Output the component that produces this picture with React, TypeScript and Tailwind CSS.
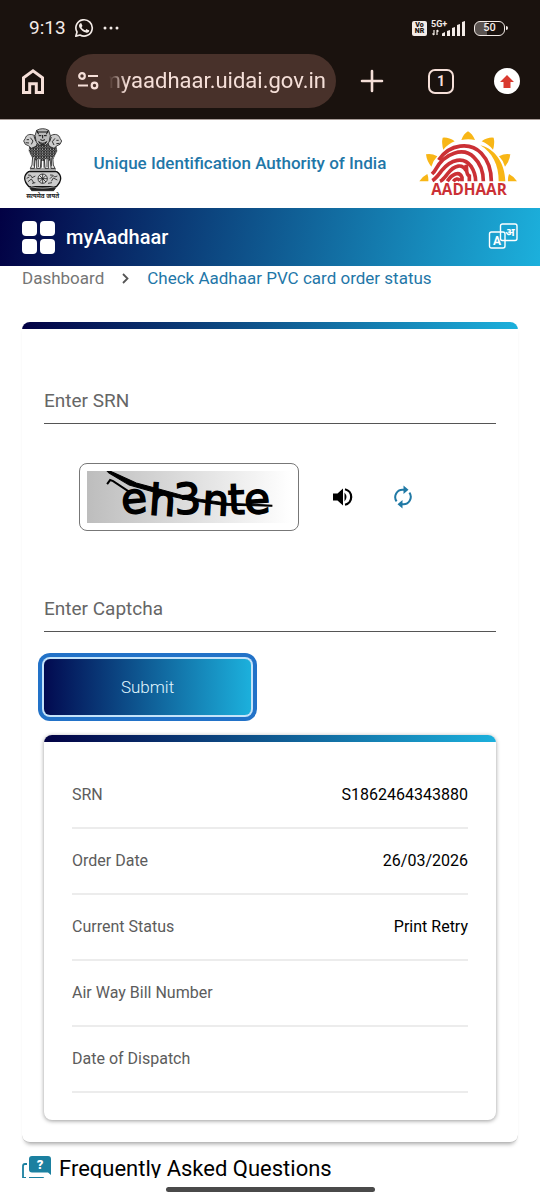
import { useState } from "react";

type Row = { label: string; value: string };

const rows: Row[] = [
    { label: "SRN", value: "S1862464343880" },
    { label: "Order Date", value: "26/03/2026" },
    { label: "Current Status", value: "Print Retry" },
    { label: "Air Way Bill Number", value: "" },
    { label: "Date of Dispatch", value: "" },
];

const StatusBar = () => (
    <div className="flex h-[54px] items-center justify-between pt-0.5 pr-8 pl-[29px] text-[#f3ebe7]">
        <div className="flex items-center gap-2">
            <span className="text-[19px] leading-6">9:13</span>
            <svg width="20" height="20" viewBox="0 0 24 24" fill="currentColor">
                <path d="M17.47 14.38c-.3-.15-1.76-.87-2.03-.97-.28-.1-.47-.15-.67.15-.2.3-.77.97-.94 1.16-.18.2-.35.23-.65.08-.3-.15-1.25-.46-2.39-1.48-.88-.79-1.48-1.76-1.65-2.06-.17-.3-.02-.46.13-.6.14-.14.3-.35.45-.53.15-.17.2-.3.3-.5.1-.19.05-.37-.03-.52-.07-.15-.66-1.6-.91-2.2-.24-.58-.49-.5-.67-.5h-.58c-.2 0-.52.07-.79.37-.27.3-1.04 1.01-1.04 2.47s1.07 2.87 1.21 3.07c.15.2 2.1 3.2 5.08 4.49 2.6 1.02 3.13.82 3.69.77.56-.05 1.77-.72 2.02-1.42.25-.7.25-1.3.17-1.42-.07-.13-.27-.2-.57-.35" />
                <path d="M2.2 21.8l1.4-5a9.8 9.8 0 1 1 3.6 3.6z" fill="none" stroke="currentColor" strokeWidth="2" strokeLinejoin="round" />
            </svg>
            <svg width="18" height="6" viewBox="0 0 18 6" fill="currentColor">
                <circle cx="3" cy="3" r="1.5" />
                <circle cx="9" cy="3" r="1.5" />
                <circle cx="15" cy="3" r="1.5" />
            </svg>
        </div>
        <div className="flex items-center gap-1">
            <span className="flex h-[15px] w-[15px] flex-col items-center justify-center rounded-xs bg-[#f3ebe7] text-[7px] leading-[6px] font-black text-[#1a120e]">
                <span>Vo</span>
                <span>NR</span>
            </span>
            <svg width="35" height="18" viewBox="0 0 35 18" fill="currentColor">
                <text x="0" y="8" fontSize="9" fontWeight="700">5G+</text>
                <path d="M3 11v5M1.5 14.5 3 16M6 16v-5M6 11l1.5 1.5" stroke="currentColor" strokeWidth="1.2" fill="none" />
                <path d="M11 14.5l3-1.5v4h-3zM16 12l3-1v6h-3zM21 9l3-1v9h-3zM26 6l3-1v12h-3zM31 3l3-1v15h-3z" />
            </svg>
            <div className="ml-1 flex items-center">
                <div className="flex h-[15px] w-[31px] items-center justify-center rounded-md border border-[#f3ebe7] bg-linear-to-r from-[#5a5350] from-40% to-[#1a120e] to-40% text-[11px] leading-3 font-medium">
                    50
                </div>
                <div className="ml-px h-1 w-0.5 rounded-r-sm bg-[#f3ebe7]" />
            </div>
        </div>
    </div>
);

const BrowserBar = () => (
    <div className="flex items-center pr-5 pl-[21px] text-[#f5dfd8]">
        <button aria-label="Home" className="shrink-0">
            <svg width="24" height="27" viewBox="0 0 24 27" fill="none" stroke="currentColor" strokeWidth="3">
                <path d="M2.5 24.5V9.8L12 2.8l9.5 7v14.7h-6.2v-8.7H8.7v8.7z" />
            </svg>
        </button>
        <div className="ml-[21px] flex h-[54px] min-w-0 flex-1 items-center rounded-full bg-[#48312a] pr-2.5 pl-3">
            <svg className="shrink-0" width="21" height="18" viewBox="0 0 21 18" fill="none" stroke="currentColor" strokeWidth="2.2">
                <circle cx="4" cy="4" r="2.8" />
                <path d="M10 4h10M0 13.5h10" />
                <circle cx="16.5" cy="13.5" r="2.8" />
            </svg>
            <div className="ml-2.5 flex min-w-0 flex-1 justify-end overflow-hidden mask-l-from-92% mask-l-to-100%">
                <input
                    aria-label="Address"
                    readOnly
                    value="myaadhaar.uidai.gov.in"
                    className="w-72 shrink-0 bg-transparent text-right text-[22px] leading-8 outline-none"
                />
            </div>
        </div>
        <button aria-label="New tab" className="ml-6 shrink-0">
            <svg width="24" height="24" viewBox="0 0 24 24" stroke="currentColor" strokeWidth="2.6" strokeLinecap="round">
                <path d="M12 2v20M2 12h20" />
            </svg>
        </button>
        <button className="ml-11 flex h-[25px] w-[26px] shrink-0 items-center justify-center rounded-[7px] border-2 border-current text-sm leading-4 font-bold">
            1
        </button>
        <button aria-label="Update" className="ml-10 flex h-[26px] w-[26px] shrink-0 items-center justify-center rounded-full bg-white">
            <svg width="14" height="13" viewBox="0 0 14 13" fill="#d93a30">
                <path d="M7 0l7 7h-3.5v6h-7V7H0z" />
            </svg>
        </button>
    </div>
);

const Emblem = () => (
    <svg className="shrink-0" width="42" height="72" viewBox="22 17 126 216" fill="none" stroke="#222" strokeWidth="2.5">
        <defs>
            <pattern id="mane" width="8" height="8" patternUnits="userSpaceOnUse">
                <rect width="8" height="8" fill="#777" stroke="none" />
                <path d="M0 0q4 7 8 0M-4 4q4 7 8 0M4 4q4 7 8 0" stroke="#111" strokeWidth="2.2" />
                <circle cx="4" cy="1" r="1.2" fill="#fff" stroke="none" />
            </pattern>
        </defs>
        <path d="M44 68L42 86l12 24 14 6h34l14-6 12-24-4-20-20-20H62z" fill="url(#mane)" stroke="none" />
        <path d="M60 40c-14-8-26-2-28 8l-5 8 5 10 9 4 9 8 14-6 6-14z" fill="#ccc" />
        <path d="M108 40c14-8 26-2 28 8l5 8-5 10-9 4-9 8-14-6-6-14z" fill="#ccc" />
        <path d="M36 52h7m-10 9 10 1m4-16 8 10-5 10m8-24 5 14m69-2h-7m10 9-10 1m-4-16-8 10 5 10m-8-24-5 14" stroke="#111" />
        <path d="M66 24q18-10 36 0l5 16-4 20-10 9H75l-10-9-4-20z" fill="#bbb" />
        <path d="M67 29h34M66 24l6 12m29-12-6 12M72 40h8m8 0h8M84 38v10m-7 4q7 5 14 0M72 58q12 10 24 0l-6 8H78z" stroke="#111" strokeWidth="3" />
        <path d="M54 104l-2 24-5 10h12l3-32M66 112v26h11l2-28M89 110l2 28h11v-26M106 106l3 32h12l-5-10-2-24" fill="#eee" />
        <path d="M59 106l-1 26m13-20v22m26-22v22m13-28 1 26M80 112v24m8-24v24M46 140h78M44 146h80" />
        <path d="M42 148h84q12 8 12 20t-13 25H43q-13-13-13-25t12-20z" fill="#ccc" stroke="#111" strokeWidth="4" />
        <circle cx="84" cy="169" r="14" fill="#ddd" />
        <path d="M84 155v28m-14-14h28m-24-10 20 20m0-20-20 20M40 158q10-2 12 8l10-5m-22 17 10-8 8 12m-22-14 8-4m62-6q10-2 14 6l8-3m-18 16 6-10 12 6m-22-4 8-8m-14 22 12-2m-60 2 10-2" />
        <path d="M45 196h78l-6 9H51z" fill="#222" />
        <path d="M48 192q36 12 72 0" stroke="#fff" strokeWidth="1.5" />
        <text x="84" y="227" textAnchor="middle" fontSize="19" fontWeight="700" fill="#222" stroke="none">सत्यमेव जयते</text>
    </svg>
);

const AadhaarLogo = () => (
    <svg className="shrink-0" width="104" height="72" viewBox="0 0 312 216">
        <g fill="#f8b616">
            <path d="M136 36q7-19 20-26 13 7 21 26-20-5-41 0z" />
            <path d="M80 29q18-2 36 11-20 8-34 25-6-20-2-36zM233 29q-18-2-36 11 20 8 34 25 6-20 2-36z" />
            <path d="M30 79q16-4 34 6-13 13-18 31-14-17-16-37zM283 79q-16-4-34 6 13 13 18 31 14-17 16-37z" />
            <path d="M10 160q8-14 24-22 4 11 3 22zM303 160q-8-14-24-22-4 11-3 22z" />
            <path d="M193 52c44 10 74 54 75 108h-20c1-48-20-88-55-108z" />
        </g>
        <g fill="none" stroke="#cb3035" strokeWidth="11">
            <path d="M68 96C102 46 164 42 196 76c21 22 30 50 30 84" />
            <path d="M48 138c4-4 8-8 11-14C86 75 142 56 174 88c21 20 28 45 28 72" />
            <path d="M49 158c12-7 20-20 28-30 28-34 66-44 89-12 9 14 13 28 13 44" />
            <path d="M72 160c9-4 16-14 22-22 22-29 46-31 56-10" />
            <path d="M94 160c14-22 36-32 44-12v12M112 160c6-8 14-10 20-2M150 110c4 16-2 28 10 34v16" />
        </g>
        <text x="159" y="202" textAnchor="middle" fontSize="46" fontWeight="700" fill="#cb3035" className="font-['Open_Sans',sans-serif]">AADHAAR</text>
    </svg>
);

const LanguageIcon = () => (
    <svg width="30" height="28" viewBox="0 0 30 28" fill="none" stroke="#fff" strokeWidth="1.4">
        <rect x="12.5" y="1" width="16.5" height="16.5" rx="2" />
        <rect x="1.5" y="9" width="15.500" height="16" rx="2" />
        <text x="9" y="21.5" textAnchor="middle" fontSize="12" fontWeight="700" fill="#fff" stroke="none">A</text>
        <text x="22" y="13" textAnchor="middle" fontSize="11" fontWeight="700" fill="#fff" stroke="none">अ</text>
    </svg>
);

const CaptchaImage = () => (
    <svg className="block h-auto w-full" viewBox="0 0 203 52">
        <defs>
            <linearGradient id="captchaBg">
                <stop offset="0" stopColor="#bdbdbd" />
                <stop offset="1" stopColor="#fff" />
            </linearGradient>
        </defs>
        <rect width="203" height="52" fill="url(#captchaBg)" />
        <text x="35" y="43" rotate="-5 4 -3 3 -2 -4" fontSize="42" stroke="#000" strokeWidth="1.6" className="font-['DejaVu_Sans',sans-serif]">eh3nte</text>
        <path d="M20 0q3 0 5 1l24 11 26 7 30 8 35 5 44 2v1l-48-1-34-5-32-7-28-8L22 2z" fill="#000" stroke="#000" />
        <path d="M20 13l3-4 3 1 18 12" fill="none" stroke="#000" strokeWidth="2" />
    </svg>
);

const TextField = ({ label, value, onChange }: { label: string; value: string; onChange: (v: string) => void }) => (
    <input
        aria-label={label}
        placeholder={label}
        value={value}
        onChange={(e) => onChange(e.target.value)}
        className="block h-[47px] w-full border-b border-[#555] bg-transparent text-[19px] text-[#222] outline-none placeholder:text-[#666]"
    />
);

const ResultCard = () => (
    <div className="mt-5 overflow-hidden rounded-lg bg-white shadow-[0_1px_4px_rgba(0,0,0,0.4)]">
        <div className="h-[7px] bg-linear-to-r/srgb from-[#020144] to-[#1cb0dc]" />
        <div className="px-7 pt-5 pb-[27px]">
            <table className="w-full text-base">
                <tbody>
                    {rows.map((row) => (
                        <tr key={row.label} className="h-[66px] border-b-2 border-[#ececec]">
                            <th scope="row" className="text-left font-normal text-[#5c5c5c]">{row.label}</th>
                            <td className="text-right text-black">{row.value}</td>
                        </tr>
                    ))}
                </tbody>
            </table>
        </div>
    </div>
);

const App = () => {
    const [srn, setSrn] = useState("");
    const [captcha, setCaptcha] = useState("");

    return (
        <div className="flex h-screen flex-col bg-white font-[Roboto,'Noto_Sans',sans-serif]">
            <div className="shrink-0 border-b border-[#a89c98] bg-[#1a120e] pb-[11px]">
                <StatusBar />
                <BrowserBar />
            </div>

            <main className="min-h-0 flex-1 overflow-hidden">
                <header className="flex h-[88px] items-center justify-between pr-5 pl-[22px]">
                    <Emblem />
                    <h1 className="text-[17px] font-medium text-[#1f77a8]">Unique Identification Authority of India</h1>
                    <AadhaarLogo />
                </header>

                <nav className="flex h-[58px] items-center bg-linear-100/srgb from-[#020144] to-[#1cb0dc] px-[22px] text-white">
                    <button aria-label="Menu" className="grid grid-cols-2 gap-[3px]">
                        <span className="h-[15px] w-[15px] rounded-sm bg-white" />
                        <span className="h-[15px] w-[15px] rounded-sm bg-white" />
                        <span className="h-[15px] w-[15px] rounded-sm bg-white" />
                        <span className="h-[15px] w-[15px] rounded-sm bg-white" />
                    </button>
                    <span className="ml-[11px] text-xl font-medium">myAadhaar</span>
                    <button aria-label="Language" className="ml-auto">
                        <LanguageIcon />
                    </button>
                </nav>

                <div className="flex items-center px-[22px] text-[17px] leading-6">
                    <a href="#dashboard" className="text-[#757575]">Dashboard</a>
                    <svg className="mx-[18px]" width="7" height="11" viewBox="0 0 7 11" fill="none" stroke="#555" strokeWidth="1.8">
                        <path d="M1 1l4.500 4.500L1 10" />
                    </svg>
                    <a href="#status" className="text-[#1f77a8]">Check Aadhaar PVC card order status</a>
                </div>

                <section className="mx-[22px] mt-8 overflow-hidden rounded-lg border-b border-[#bbb] shadow-[0_4px_4px_-3px_rgba(0,0,0,0.35)]">
                    <div className="h-[7px] bg-linear-to-r/srgb from-[#020144] to-[#1cb0dc]" />
                    <form className="px-[22px] pt-12 pb-[22px]" onSubmit={(e) => e.preventDefault()}>
                        <TextField label="Enter SRN" value={srn} onChange={setSrn} />
                        <div className="mt-[39px] flex items-center pl-[35px]">
                            <div className="w-[220px] rounded-lg border border-[#777] p-[7px]">
                                <CaptchaImage />
                            </div>
                            <button type="button" aria-label="Play captcha" className="ml-[34px]">
                                <svg width="20" height="20" viewBox="0 0 20 20">
                                    <path d="M0 6.500h4.500L10 1.500v17l-5.500-5H0z" />
                                    <path d="M11.500 5.500q4 4.500 0 9z" />
                                    <path d="M12 2.200a8 8 0 0 1 0 15.600" fill="none" stroke="#000" strokeWidth="2.200" />
                                </svg>
                            </button>
                            <button type="button" aria-label="Refresh captcha" className="ml-10">
                                <svg width="20" height="24" viewBox="0 0 20 24" fill="none" stroke="#2079a5" strokeWidth="2">
                                    <path d="M3.600 16.300A7.300 7.300 0 0 1 10 4.800h2M16.400 7.700A7.300 7.300 0 0 1 10 19.200H8" />
                                    <path d="M10.500.500l5 4.300-5 4.300zM9.500 14.900l-5 4.300 5 4.300z" fill="#2079a5" stroke="none" />
                                </svg>
                            </button>
                        </div>
                        <div className="mt-[54px]">
                            <TextField label="Enter Captcha" value={captcha} onChange={setCaptcha} />
                        </div>
                        <button
                            type="submit"
                            className="mt-[27px] block h-14 w-[207px] rounded-md bg-linear-to-r/srgb from-[#020a50] to-[#1cb0dc] text-[17px] font-light text-[#e0f7ff] shadow-[0_0_0_2px_#c5e4fa,0_0_0_6px_#2272c8]"
                        >
                            Submit
                        </button>
                        <ResultCard />
                    </form>
                </section>

                <div className="mt-2.5 flex items-center gap-2 px-[22px]">
                    <svg className="shrink-0" width="29" height="26" viewBox="0 0 29 26">
                        <path d="M5 8H3q-2 0-2 2v12h3M7 22h14l3 3" fill="none" stroke="#1b80a0" strokeWidth="1.8" />
                        <path d="M10 0h16q3 0 3 3v16l-3-2.500H10q-3 0-3-3V3q0-3 3-3z" fill="#1b80a0" />
                        <text x="18" y="12.500" textAnchor="middle" fontSize="13" fontWeight="900" fill="#fff">?</text>
                    </svg>
                    <h2 className="text-[22px] leading-8 text-black">Frequently Asked Questions</h2>
                </div>
            </main>

            <div className="flex h-[22px] shrink-0 items-center justify-center">
                <div className="h-[5px] w-[209px] rounded-full bg-[#4a4a4a]" />
            </div>
        </div>
    );
};

export default App;
